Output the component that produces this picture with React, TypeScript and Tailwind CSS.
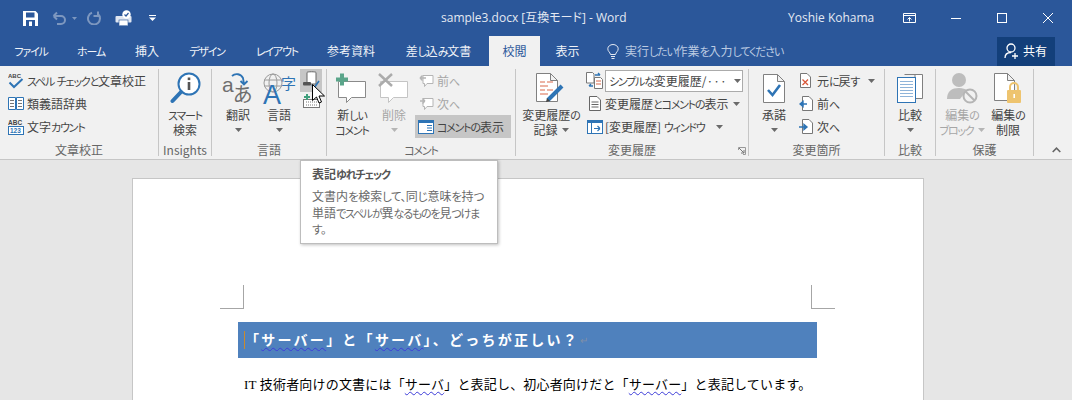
import React from "react";

const T = ({ children, loose }: { children: string; loose?: boolean }) => (
  <>
    {children.split(/([\u3001\u3002\u3040-\u30ff]+)/).map((part, i) =>
      i % 2 === 1 ? (
        <span key={i} className={loose ? "text-[11.5px] tracking-[-0.5px]" : "text-[11px] tracking-[-1.2px]"}>
          {part}
        </span>
      ) : (
        <React.Fragment key={i}>{part}</React.Fragment>
      ),
    )}
  </>
);

const Caret = ({ color = "#6a6a6a" }: { color?: string }) => (
  <svg width="7" height="4" viewBox="0 0 7 4"><path d="M0 0h7L3.5 4z" fill={color} /></svg>
);

const Doc = ({ w, h, fold = 7, stroke = "#808080" }: { w: number; h: number; fold?: number; stroke?: string }) => (
  <path d={`M.5 .5H${w - fold - 0.5}L${w - 0.5} ${fold + 0.5}V${h - 0.5}H.5Z M${w - fold - 0.5} .5V${fold + 0.5}H${w - 0.5}`} fill="#fff" stroke={stroke} />
);

const Bubble = ({ stroke = "#8a8a8a" }: { stroke?: string }) => (
  <path d="M2.5 8.5H29.5V24.5H15.5L10.5 29.5V24.5H2.5Z" fill="#fff" stroke={stroke} strokeLinejoin="round" />
);

const SmallBubble = ({ arrow, color }: { arrow: "l" | "r"; color: string }) => (
  <svg width="15" height="15" viewBox="0 0 15 15">
    <path d="M4 2.5H14V10.5H8L5.5 13.5V10.5H4Z" fill="#fff" stroke="#b5b5b5" />
    <path d={arrow === "l" ? "M1 5H7M1 5L3.5 2.5M1 5L3.5 7.5" : "M1 5H6M6 5L3.5 2.5M6 5L3.5 7.5"} fill="none" stroke={color} strokeWidth="1.4" />
  </svg>
);

const Big = ({
  icon,
  lines,
  caret,
  inline,
  className,
  disabled,
}: {
  icon: React.ReactNode;
  lines: string[];
  caret?: boolean;
  inline?: boolean;
  className: string;
  disabled?: boolean;
}) => (
  <div className={`flex flex-col items-center shrink-0 ${className} ${disabled ? "text-[#a6a6a6]" : ""}`}>
    <div className="h-[38px] flex items-center justify-center">{icon}</div>
    {lines.map((l, i) => (
      <div key={i} className="h-[15px] leading-[15px] whitespace-nowrap flex items-center gap-1">
        <span><T>{l}</T></span>
        {inline && i === lines.length - 1 && <Caret color={disabled ? "#b5b5b5" : "#6a6a6a"} />}
      </div>
    ))}
    {caret && (
      <div className="h-[15px] flex items-center">
        <Caret color={disabled ? "#b5b5b5" : "#6a6a6a"} />
      </div>
    )}
  </div>
);

const Group = ({ label, className, children }: { label: string; className: string; children?: React.ReactNode }) => (
  <div className={`h-[87px] shrink-0 border-r border-[#c6c6c6] flex flex-col relative ${className}`}>
    <div className="h-[74px] flex">{children}</div>
    <div className="h-[13px] leading-[13px] text-center text-[#666] whitespace-nowrap"><T>{label}</T></div>
  </div>
);

const Row = ({ icon, text, iconBox, after, className = "" }: { icon: React.ReactNode; text: string; iconBox: string; after?: React.ReactNode; className?: string }) => (
  <div className={`h-[23px] flex items-center whitespace-nowrap ${className}`}>
    <div className={`flex items-center justify-center shrink-0 ${iconBox}`}>{icon}</div>
    <span><T>{text}</T></span>
    {after}
  </div>
);

const Tab = ({ label, className }: { label: string; className: string }) => (
  <div className={`h-[30px] flex items-center justify-center whitespace-nowrap shrink-0 ${className}`}><span><T>{label}</T></span></div>
);

const Wavy = ({ children }: { children: React.ReactNode }) => (
  <span className="underline decoration-wavy decoration-[#3c3cd8] decoration-1 underline-offset-2">{children}</span>
);

export default function App() {
  return (
    <div className="relative w-[1072px] h-[400px] overflow-hidden flex flex-col bg-[#e6e6e6] text-[12px] text-[#444] font-['Noto_Sans_CJK_JP',sans-serif] [font-feature-settings:'palt']">
      {/* Title bar */}
      <div className="h-[36px] shrink-0 bg-[#2b579a] flex items-center text-[#e4e9f2]">
        <div className="w-[441px] shrink-0 flex items-center">
          <svg className="ml-[23px]" width="15" height="15" viewBox="0 0 15 15">
            <path d="M0 0H12.5L15 2.5V15H0Z" fill="#fff" />
            <rect x="3" y="1.5" width="8.5" height="5" fill="#2b579a" />
            <rect x="3" y="9" width="9" height="6" fill="#2b579a" />
            <rect x="6" y="10.5" width="3" height="4.5" fill="#fff" />
          </svg>
          <svg className="ml-[14px]" width="14" height="14" viewBox="0 0 14 14">
            <path d="M1.5 5H9a4 4 0 0 1 0 8H5M1.5 5L5 1.5M1.5 5L5 8.5" fill="none" stroke="#7d97bf" strokeWidth="2" />
          </svg>
          <div className="ml-[6px] flex"><svg width="5" height="3" viewBox="0 0 5 3"><path d="M0 0h5L2.5 3z" fill="#7d97bf" /></svg></div>
          <svg className="ml-[10px]" width="14" height="14" viewBox="0 0 14 14">
            <path d="M5 1.8A6 6 0 1 0 11 3M11 0.5V5H6.5" fill="none" stroke="#7d97bf" strokeWidth="2" />
          </svg>
          <svg className="ml-[14px]" width="17" height="17" viewBox="0 0 17 17">
            <rect x="4" y="7" width="9" height="9" fill="#fff" />
            <rect x="0.5" y="6" width="16" height="6.5" rx="1" fill="#dfe6f1" />
            <rect x="4" y="10" width="9" height="5.5" fill="#fff" stroke="#2b579a" strokeWidth=".6" />
            <circle cx="11.5" cy="4.5" r="4.2" fill="#fff" />
            <path d="M9.5 4.5L11 6L13.5 3" fill="none" stroke="#2b579a" strokeWidth="1.2" />
          </svg>
          <svg className="ml-[17px]" width="7" height="6" viewBox="0 0 7 6">
            <rect width="7" height="1" x="0" y="0" fill="#fff" />
            <path d="M0 2.5h7L3.5 6z" fill="#fff" />
          </svg>
        </div>
        <div className="w-[347px] shrink-0 whitespace-nowrap font-['Open_Sans','Noto_Sans_CJK_JP',sans-serif]">sample3.docx [互換モード] - Word</div>
        <div className="w-[115px] shrink-0 whitespace-nowrap font-['Open_Sans',sans-serif]">Yoshie Kohama</div>
        <svg width="13" height="10" viewBox="0 0 13 10">
          <path d="M.5 .5H12.5V9.5H.5ZM.5 2.5H12.5M6.5 8.5V4.5M4.5 6.5L6.5 4.5L8.5 6.5" fill="none" stroke="#fff" />
        </svg>
        <svg className="ml-[35px]" width="10" height="1" viewBox="0 0 10 1"><rect width="10" height="1" fill="#fff" /></svg>
        <svg className="ml-[36px]" width="10" height="10" viewBox="0 0 10 10"><rect x=".5" y=".5" width="9" height="9" fill="none" stroke="#fff" /></svg>
        <svg className="ml-[36px]" width="10" height="10" viewBox="0 0 10 10"><path d="M0 0L10 10M10 0L0 10" stroke="#fff" strokeWidth="1" /></svg>
      </div>

      {/* Tabs */}
      <div className="h-[30px] shrink-0 bg-[#2b579a] flex items-center text-[#f0f3f8]">
        <Tab label="ファイル" className="w-[62px]" />
        <Tab label="ホーム" className="w-[58px]" />
        <Tab label="挿入" className="w-[54px]" />
        <Tab label="デザイン" className="w-[66px]" />
        <Tab label="レイアウト" className="w-[74px]" />
        <Tab label="参考資料" className="w-[74px]" />
        <Tab label="差し込み文書" className="w-[101px]" />
        <Tab label="校閲" className="w-[51px] bg-[#f1f1f1] text-[#2b579a]" />
        <Tab label="表示" className="w-[55px]" />
        <div className="ml-[12px] w-[390px] shrink-0 flex items-center whitespace-nowrap text-[#bccbe2]">
          <svg width="12" height="15" viewBox="0 0 12 15" className="mr-[6px]">
            <path d="M3.5 10.5C3 8 .8 7.5 .8 4.8A5.2 4.3 0 0 1 11.2 4.8C11.2 7.5 9 8 8.5 10.5ZM4 12.5H8M4.5 14.5H7.5" fill="none" stroke="#e4e9f2" />
          </svg>
          <span><T>実行したい作業を入力してください</T></span>
        </div>
        <div className="w-[58px] h-[29px] shrink-0 bg-[#133f7a] flex items-center text-white">
          <svg className="ml-[7px] mr-[4px]" width="15" height="16" viewBox="0 0 15 16">
            <circle cx="7" cy="5" r="4" fill="none" stroke="#fff" strokeWidth="1.3" />
            <path d="M1 15C1 11 3.5 9.5 7 9.5" fill="none" stroke="#fff" strokeWidth="1.3" />
            <path d="M8 13H14M11 10V16" stroke="#fff" strokeWidth="1.3" />
          </svg>
          共有
        </div>
      </div>

      {/* Ribbon */}
      <div className="h-[94px] shrink-0 bg-[#f1f1f1] border-b border-[#c6c6c6] pt-[3px] flex relative">
        <Group label="文章校正" className="w-[159px]">
          <div className="flex flex-col pl-[8px]">
            <Row iconBox="w-[16px] mr-[3px]" text="スペル チェックと文章校正" icon={
              <svg width="16" height="17" viewBox="0 0 16 17">
                <text x="0" y="6" fontSize="6" fontWeight="700" fill="#444" fontFamily="Liberation Sans">ABC</text>
                <path d="M1.5 10.5L6 15L14.5 7" fill="none" stroke="#2e74b5" strokeWidth="2" />
              </svg>} />
            <Row iconBox="w-[16px] mr-[3px]" text="類義語辞典" icon={
              <svg width="16" height="13" viewBox="0 0 16 13">
                <path d="M.5 .5H7.5V12.5H.5ZM8.5 .5H15.5V12.5H8.5Z" fill="#fff" stroke="#2e74b5" />
                <path d="M2 3.5H6M2 6.5H6M2 9.5H6M10 3.5H14M10 6.5H14M10 9.5H14" stroke="#777" />
              </svg>} />
            <Row iconBox="w-[16px] mr-[3px]" text="文字カウント" icon={
              <svg width="16" height="16" viewBox="0 0 16 16">
                <text x="0" y="6" fontSize="6.5" fontWeight="700" fill="#444" fontFamily="Liberation Sans">ABC</text>
                <rect x=".5" y="7.5" width="15" height="8" fill="#fff" stroke="#2e74b5" />
                <text x="2" y="14" fontSize="6.5" fontWeight="700" fill="#2e74b5" fontFamily="Liberation Sans">123</text>
              </svg>} />
          </div>
        </Group>

        <Group label="Insights" className="w-[53px]">
          <Big className="w-[52px]" lines={["スマート", "検索"]} icon={
            <svg width="31" height="32" viewBox="0 0 31 32">
              <circle cx="19" cy="12" r="10.5" fill="#fff" stroke="#2e74b5" strokeWidth="2" />
              <path d="M11 20L2.5 29" stroke="#2e74b5" strokeWidth="4" strokeLinecap="round" />
              <rect x="17.7" y="10" width="2.6" height="8" fill="#555" />
              <rect x="17.7" y="5.5" width="2.6" height="2.6" fill="#555" />
            </svg>} />
        </Group>

        <Group label="言語" className="w-[115px]">
          <Big className="w-[40px] ml-[6px]" lines={["翻訳"]} caret icon={
            <svg className="overflow-visible" width="32" height="33" viewBox="0 0 32 33">
              <text x="0" y="20" fontSize="21" fill="#6e6e6e" fontFamily="Liberation Sans">a</text>
              <text x="11" y="30" fontSize="20" fill="#6e6e6e" fontFamily="Noto Sans CJK JP">あ</text>
              <path d="M10 4A7 7 0 0 1 21 6L22 12M18.5 9L22 12.5L25.5 9" fill="none" stroke="#2e74b5" strokeWidth="1.8" />
            </svg>} />
          <Big className="w-[42px]" lines={["言語"]} caret icon={
            <svg className="overflow-visible" width="33" height="33" viewBox="0 0 33 33">
              <circle cx="10" cy="11" r="9" fill="none" stroke="#9a9a9a" />
              <ellipse cx="10" cy="11" rx="4" ry="9" fill="none" stroke="#9a9a9a" />
              <path d="M1 8H19M1 14H19" stroke="#9a9a9a" />
              <text x="0" y="32" fontSize="27" fontWeight="500" fill="#2e74b5" fontFamily="Liberation Sans">A</text>
              <text x="18" y="17" fontSize="15" fill="#2e74b5" fontFamily="Noto Sans CJK JP">字</text>
            </svg>} />
          <div className="w-[22px] flex flex-col items-center">
            <div className="w-[22px] h-[23px] bg-[#c6c6c6] flex items-center justify-center">
              <svg width="18" height="19" viewBox="0 0 18 19">
                <path d="M5 1.5C5 .5 14 .5 14 1.5V13H5Z" fill="#fff" stroke="#666" />
                <rect x="1" y="11" width="8" height="3.5" rx="1" fill="#555" />
                <path d="M10 14L12 17L17 10" fill="none" stroke="#2e74b5" strokeWidth="1.6" />
              </svg>
            </div>
            <svg className="mt-[2px]" width="17" height="14" viewBox="0 0 17 14">
              <rect x=".5" y="5.5" width="16" height="8" fill="#fff" stroke="#777" />
              <path d="M3 8H14M3 11H14" stroke="#777" strokeDasharray="1 1" />
              <path d="M1 3H7M4 0V6" stroke="#3f9f7c" strokeWidth="2" />
            </svg>
          </div>
        </Group>

        <Group label="コメント" className="w-[189px]">
          <Big className="w-[44px] ml-[3px]" lines={["新しい", "コメント"]} icon={
            <svg width="32" height="31" viewBox="0 0 32 31">
              <Bubble />
              <path d="M0 6.5H12M6 0.5V12.5" stroke="#5aa58a" strokeWidth="4" />
            </svg>} />
          <Big className="w-[36px] ml-[2px]" disabled lines={["削除"]} caret icon={
            <svg width="32" height="31" viewBox="0 0 32 31">
              <Bubble stroke="#c4c4c4" />
              <path d="M1 1L14 13M14 1L1 13" stroke="#ababab" strokeWidth="2.5" />
            </svg>} />
          <div className="flex flex-col w-[96px] ml-[3px] text-[#a6a6a6]">
            <Row iconBox="w-[16px] ml-[3px] mr-[3px]" text="前へ" icon={<SmallBubble arrow="l" color="#b5b5b5" />} />
            <Row iconBox="w-[16px] ml-[3px] mr-[3px]" text="次へ" icon={<SmallBubble arrow="r" color="#b5b5b5" />} />
            <Row className="bg-[#c6c6c6] text-[#444]" iconBox="w-[16px] ml-[3px] mr-[3px]" text="コメントの表示" icon={
              <svg width="16" height="14" viewBox="0 0 16 14">
                <rect x=".5" y=".5" width="15" height="13" fill="#fff" stroke="#2e74b5" />
                <rect x="0" y="0" width="16" height="3" fill="#2e74b5" />
                <path d="M9 5.5H14M9 8H14M9 10.5H14" stroke="#2e74b5" />
              </svg>} />
          </div>
        </Group>

        <Group label="変更履歴" className="w-[233px]">
          <Big className="w-[66px] ml-[2px]" lines={["変更履歴の", "記録"]} inline icon={
            <svg width="30" height="31" viewBox="0 0 30 31">
              <Doc w={22} h={29} />
              <path d="M4 9H9M11 9H17M4 13H12M4 17H9M11 17H17M4 21H12" stroke="#d9694a" />
              <path d="M12 27L26 13" stroke="#2e74b5" strokeWidth="4" />
              <path d="M10 29L11 25L14 28Z" fill="#444" />
            </svg>} />
          <div className="flex flex-col">
            <div className="h-[23px] flex items-center">
              <div className="w-[21px] flex justify-center">
                <svg width="17" height="17" viewBox="0 0 17 17">
                  <path d="M.5 .5H6.5L8 2V11H.5Z" fill="#fff" stroke="#777" />
                  <path d="M8.5 5.5H14.5L16.5 7.5V16.5H8.5Z" fill="#fff" stroke="#777" />
                  <path d="M10 9H15M10 12H15" stroke="#d9694a" />
                  <path d="M3 14H7M3 14L5 12" fill="none" stroke="#2e74b5" strokeWidth="1.4" />
                  <path d="M9 3H14M14 3L12 1" fill="none" stroke="#2e74b5" strokeWidth="1.4" />
                </svg>
              </div>
              <div className="w-[138px] h-[22px] bg-white border border-[#ababab] flex items-center pl-[3px] whitespace-nowrap">
                <span className="w-[125px] overflow-hidden"><T>シンプルな変更履歴/</T>···</span>
                <Caret />
              </div>
            </div>
            <Row iconBox="w-[21px]" text="変更履歴とコメントの表示" after={<span className="ml-[5px] flex"><Caret /></span>} icon={
              <svg width="12" height="15" viewBox="0 0 12 15">
                <path d="M.5 .5H8L11.5 4V14.5H.5Z" fill="#fff" stroke="#666" />
                <path d="M2.5 6H9.5M2.5 8.5H9.5M2.5 11H9.5" stroke="#666" />
              </svg>} />
            <Row iconBox="w-[21px]" text="[変更履歴] ウィンドウ" after={<span className="ml-[11px] flex"><Caret /></span>} icon={
              <svg width="16" height="14" viewBox="0 0 16 14">
                <rect x=".5" y=".5" width="15" height="13" fill="#fff" stroke="#2e74b5" />
                <rect x="0" y="0" width="16" height="3" fill="#2e74b5" />
                <path d="M4.5 3V14" stroke="#2e74b5" />
                <path d="M7 8.5H13M13 8.5L10.5 6M13 8.5L10.5 11" fill="none" stroke="#2e74b5" strokeWidth="1.2" />
              </svg>} />
          </div>
          <svg className="absolute right-[2px] bottom-[1px]" width="8" height="8" viewBox="0 0 8 8">
            <path d="M.5 3V.5H7.5V7.5H5" fill="none" stroke="#999" />
            <path d="M1 1L6 6M3 6H6V3" fill="none" stroke="#777" />
          </svg>
        </Group>

        <Group label="変更箇所" className="w-[136px]">
          <Big className="w-[40px] ml-[5px]" lines={["承諾"]} caret icon={
            <svg width="22" height="29" viewBox="0 0 22 29">
              <Doc w={22} h={29} />
              <path d="M5 16L9.5 21L17 11" fill="none" stroke="#2e74b5" strokeWidth="2.6" />
            </svg>} />
          <div className="flex flex-col">
            <Row iconBox="w-[23px]" text="元に戻す" after={<span className="ml-[9px] flex"><Caret /></span>} icon={
              <svg width="11" height="15" viewBox="0 0 11 15">
                <path d="M.5 .5H7L10.5 4V14.5H.5Z" fill="#fff" stroke="#777" />
                <path d="M2.5 6.5L8 12M8 6.5L2.5 12" stroke="#d9583a" strokeWidth="1.3" />
              </svg>} />
            <Row iconBox="w-[23px]" text="前へ" icon={
              <svg width="14" height="15" viewBox="0 0 14 15">
                <path d="M3.5 .5H10L13.5 4V14.5H3.5Z" fill="#fff" stroke="#777" />
                <path d="M1 8H8M1 8L4 5.5V10.5Z" fill="#2e74b5" stroke="#2e74b5" strokeWidth="1.4" />
              </svg>} />
            <Row iconBox="w-[23px]" text="次へ" icon={
              <svg width="14" height="15" viewBox="0 0 14 15">
                <path d="M3.5 .5H10L13.5 4V14.5H3.5Z" fill="#fff" stroke="#777" />
                <path d="M0 8H7M8 8L5 5.5V10.5Z" fill="#2e74b5" stroke="#2e74b5" strokeWidth="1.4" />
              </svg>} />
          </div>
        </Group>

        <Group label="比較" className="w-[51px]">
          <Big className="w-[50px]" lines={["比較"]} caret icon={
            <svg width="26" height="29" viewBox="0 0 26 29">
              <path d="M7.5 .5H25.5V24.5H18V.5" fill="#fff" stroke="#808080" />
              <rect x=".5" y="3.5" width="18" height="25" fill="#fff" stroke="#2e74b5" />
              <path d="M3 7.5H16M3 10.5H16M3 13.5H16M3 16.5H16M3 19.5H16M3 22.5H16" stroke="#8fb4d9" />
            </svg>} />
        </Group>

        <Group label="保護" className="w-[98px]">
          <Big className="w-[50px] ml-[1px]" disabled lines={["編集の", "ブロック"]} inline icon={
            <svg width="31" height="32" viewBox="0 0 31 32">
              <circle cx="12" cy="8" r="7" fill="#bdbdbd" />
              <path d="M0 27C0 19 5 16 12 16C16 16 18 17 20 18L13 27Z" fill="#bdbdbd" />
              <circle cx="23" cy="24" r="6.5" fill="#f1f1f1" stroke="#b5b5b5" strokeWidth="2" />
              <path d="M18.5 19.5L27.5 28.5" stroke="#b5b5b5" strokeWidth="2" />
            </svg>} />
          <Big className="w-[42px]" lines={["編集の", "制限"]} icon={
            <svg width="28" height="31" viewBox="0 0 28 31">
              <Doc w={21} h={28} />
              <rect x="13" y="17" width="14" height="13" rx="1" fill="#eec46f" />
              <path d="M16 17V14A4 4 0 0 1 24 14V17" fill="none" stroke="#eec46f" strokeWidth="2" />
              <rect x="19.4" y="21" width="1.6" height="4" fill="#fff" />
            </svg>} />
        </Group>

        <div className="flex-1 flex items-end justify-center pb-[6px] pl-[7px]">
          <svg width="9" height="6" viewBox="0 0 9 6"><path d="M.7 5L4.5 1.2L8.3 5" fill="none" stroke="#666" strokeWidth="1.6" /></svg>
        </div>
      </div>

      {/* Document */}
      <div className="flex-1 min-h-0 pt-[18px] pl-[132px] overflow-hidden">
        <div className="w-[792px] h-[300px] bg-white border border-[#c6c6c6] border-b-0 pt-[106px] font-['Liberation_Serif','Noto_Sans_CJK_JP',serif] text-black [font-feature-settings:normal]">
          <div className="ml-[87px] w-[615px] flex justify-between">
            <div className="w-[24px] h-[24px] border-r border-b border-[#a6a6a6]" />
            <div className="w-[24px] h-[24px] border-l border-b border-[#a6a6a6]" />
          </div>
          <div className="ml-[105px] mt-[13px] w-[579px] h-[36px] bg-[#4f81bd] flex items-center pl-[6px] text-white text-[14px] font-bold tracking-[2.25px] whitespace-nowrap">
            <div className="w-px h-[18px] bg-[#c98a2e] shrink-0" />
            <span>「<Wavy>サーバー</Wavy>」と「<Wavy>サーバ</Wavy>」、どっちが正しい？</span>
            <span className="text-[#7f8fa8] text-[10px] font-normal ml-[1px]">↵</span>
          </div>
          <div className="ml-[111px] mt-[18px] text-[13px] tracking-[0.18px] leading-[18px] whitespace-nowrap">
            IT 技術者向けの文書には「<Wavy>サーバ</Wavy>」と表記し、初心者向けだと「<Wavy>サーバー</Wavy>」と表記しています。
          </div>
        </div>
      </div>

      {/* Tooltip */}
      <div className="absolute left-[300px] top-[160px] w-[198px] h-[84px] bg-white border border-[#bdbdbd] shadow-[1px_1px_3px_rgba(0,0,0,0.25)] pl-[11px] pt-[5px] text-[#6a6a6a] leading-[15.5px]">
        <div className="font-bold text-[#555] mb-[6px] leading-[16px]"><T>表記ゆれチェック</T></div>
        <div className="whitespace-nowrap"><T loose>文書内を検索して、同じ意味を持つ</T></div>
        <div className="whitespace-nowrap"><T>単語でスペルが異なるものを見つけま</T></div>
        <div className="whitespace-nowrap"><T loose>す。</T></div>
      </div>

      {/* Mouse pointer */}
      <svg className="absolute left-[312px] top-[84px]" width="13" height="20" viewBox="0 0 13 20">
        <path d="M.5 .5V16.5L4.5 13L7 19L9.5 18L7 12H12.5Z" fill="#fff" stroke="#000" />
      </svg>
    </div>
  );
}
